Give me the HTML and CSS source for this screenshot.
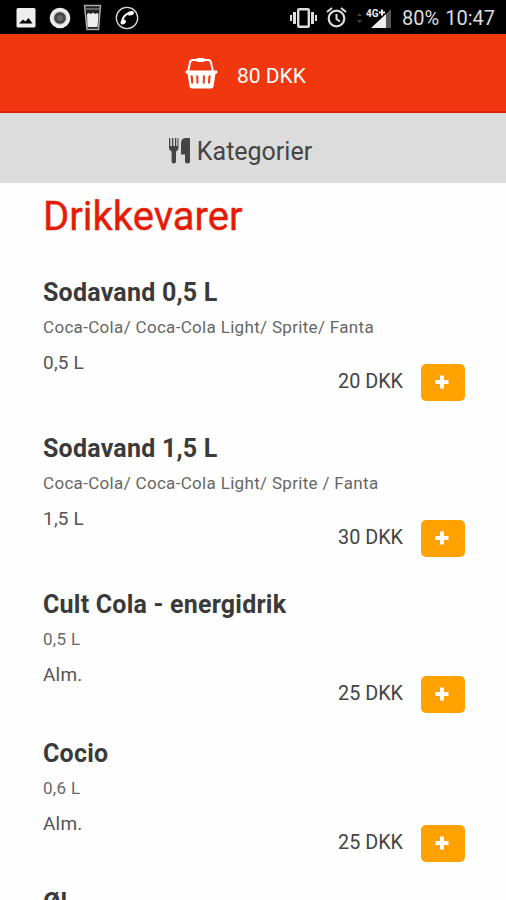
FILE: index.html
```html
<!DOCTYPE html>
<html lang="da">

<head>
    <meta charset="UTF-8">
    <meta name="viewport" content="width=device-width, initial-scale=1.0">
    <title>Drikkevarer</title>
    <link rel="stylesheet" href="styles.css">
</head>

<body>
    <div class="statusbar">
        <div class="status-left">
            <svg width="20" height="20" viewBox="0 0 20 20">
                <path fill="#eee" fill-rule="evenodd" d="M2 0h16q1.500 0 1.500 1.500v16.500q0 1.500-1.500 1.500h-16q-1.500 0-1.500-1.500v-16.500q0-1.500 1.500-1.500zM3 15.500h13.500l-4-5.500-3 3.500-2.500-2z" />
            </svg>
            <svg width="22" height="22" viewBox="0 0 22 22">
                <circle cx="11" cy="11" r="10.300" fill="#eee" />
                <circle cx="11" cy="11" r="6" fill="#444" stroke="#888" stroke-width="1" />
                <circle cx="11" cy="11" r="3" fill="#666" />
            </svg>
            <svg class="glass" width="20" height="27" viewBox="0 0 20 27">
                <path fill="#222" stroke="#aaa" stroke-width="1.500" d="M1.500 1.500h16l-2 24h-11.500z" />
                <path fill="#eee" d="M4 10l2-1 2 1 2-1.500 2 1.500 2-1 1.500 1-1 13h-10z" />
                <path fill="none" stroke="#aaa" d="M3 5h13.500" />
            </svg>
            <svg width="24" height="24" viewBox="0 0 24 24">
                <circle cx="12" cy="12" r="10.700" fill="none" stroke="#ddd" stroke-width="1.300" />
                <path fill="none" stroke="#eee" stroke-width="2" d="M7 17C7 11 11 7 16.500 7" />
                <path fill="none" stroke="#fff" stroke-width="4" stroke-linecap="round" d="M7.500 16.500l1.500-.8M14.500 7.500l2.500-.5" />
            </svg>
        </div>
        <div class="status-right">
            <svg class="vibrate" width="27" height="20" viewBox="0 0 27 20">
                <path fill="#ddd" d="M0 7h2v6h-2zM3 4h3v12h-3zM21 4h3v12h-3zM25 7h2v6h-2z" />
                <rect x="8.200" y="1.200" width="10.600" height="17.600" rx="1" fill="#000" stroke="#ddd" stroke-width="2.400" />
            </svg>
            <svg class="alarm" width="21" height="21" viewBox="0 0 21 21">
                <circle cx="10.500" cy="11.500" r="7.800" fill="none" stroke="#ddd" stroke-width="2.200" />
                <path fill="none" stroke="#ddd" stroke-width="2" d="M1 5l5-4M20 5l-5-4M10.500 7v5l3.500 2.500" />
            </svg>
            <svg class="signal" width="35" height="22" viewBox="0 0 35 22">
                <path fill="#444" d="M0 9l2.500-3 2.500 3zM0 13l2.500 3 2.500-3z" />
                <path fill="#eee" d="M14 21L29 7v14z" />
                <path fill="#555" d="M29 7l5-5v19h-5z" />
                <text class="network" x="9" y="10">4G</text>
                <path stroke="#eee" stroke-width="2" d="M22 5.500h6M25 2.500v6" />
            </svg>
            <span>80%</span>
            <span class="clock">10:47</span>
        </div>
    </div>

    <header class="basket">
        <svg width="35" height="33" viewBox="0 0 35 33">
            <path fill="none" stroke="#fff" stroke-width="2" stroke-linejoin="round" d="M5 15L7 5.500q.5-2.500 3-2.500h15q2.500 0 3 2.500L30 15" />
            <path stroke="#fff" stroke-width="4" stroke-linecap="round" d="M15 3h5" />
            <path fill="#fff" fill-rule="evenodd" d="M1.500 13.500h32q1 0 1 1.500t-1 1.500h-1l-2 13q-.5 2-2.500 2h-19q-2 0-2.500-2l-2-13h-1q-1 0-1-1.500t1-1.500zM7.500 18.500l.8 8h2l-.6-8zM13.200 18.500l.3 8h2l-.3-8zM20 18.500l-.3 8h2l.3-8zM25.500 18.500l-.6 8h2l.8-8z" />
        </svg>
        <span>80 DKK</span>
    </header>

    <nav class="categories">
        <svg width="22" height="26" viewBox="0 0 22 26">
            <path fill="#444" d="M0 0h1.300v8h1.600v-8h1.400v8h1.600v-8h1.400v8h1.200v-8h1v10q0 2-2.500 3.500v10q0 2-2.200 2t-2.200-2v-10q-2.600-1.500-2.600-3.500z" />
            <path fill="#444" d="M21 1v22.500q0 2-2.500 2t-2.500-2v-7h-4v-11.500q0-5 5-5h3q1 0 1 1z" />
        </svg>
        <span>Kategorier</span>
    </nav>

    <main class="menu">
        <h1>Drikkevarer</h1>

        <section class="item">
            <h2>Sodavand 0,5 L</h2>
            <p class="description">Coca-Cola/ Coca-Cola Light/ Sprite/ Fanta</p>
            <div class="row">
                <span class="size">0,5 L</span>
                <div class="buy">
                    <span>20 DKK</span>
                    <button class="add" aria-label="Tilføj"><svg width="14" height="14" viewBox="0 0 14 14"><path d="M7 .5v13M.5 7h13" /></svg></button>
                </div>
            </div>
        </section>

        <section class="item">
            <h2>Sodavand 1,5 L</h2>
            <p class="description">Coca-Cola/ Coca-Cola Light/ Sprite / Fanta</p>
            <div class="row">
                <span class="size">1,5 L</span>
                <div class="buy">
                    <span>30 DKK</span>
                    <button class="add" aria-label="Tilføj"><svg width="14" height="14" viewBox="0 0 14 14"><path d="M7 .5v13M.5 7h13" /></svg></button>
                </div>
            </div>
        </section>

        <section class="item short">
            <h2>Cult Cola - energidrik</h2>
            <p class="description">0,5 L</p>
            <div class="row">
                <span class="size">Alm.</span>
                <div class="buy">
                    <span>25 DKK</span>
                    <button class="add" aria-label="Tilføj"><svg width="14" height="14" viewBox="0 0 14 14"><path d="M7 .5v13M.5 7h13" /></svg></button>
                </div>
            </div>
        </section>

        <section class="item short">
            <h2>Cocio</h2>
            <p class="description">0,6 L</p>
            <div class="row">
                <span class="size">Alm.</span>
                <div class="buy">
                    <span>25 DKK</span>
                    <button class="add" aria-label="Tilføj"><svg width="14" height="14" viewBox="0 0 14 14"><path d="M7 .5v13M.5 7h13" /></svg></button>
                </div>
            </div>
        </section>

        <section class="item">
            <h2>Øl</h2>
        </section>
    </main>
</body>

</html>
```
FILE: styles.css
```css
* {
    box-sizing: border-box;
}

body {
    margin: 0;
    height: 900px;
    overflow: hidden;
    display: flex;
    flex-direction: column;
    font-family: Roboto, "Liberation Sans", sans-serif;
    background-color: #fefefe;
    color: #444;
}

.statusbar {
    flex: none;
    height: 34px;
    display: flex;
    justify-content: space-between;
    align-items: center;
    padding: 1px 11px 0 16px;
    background-color: #000;
    color: #ddd;
    font-size: 20px;
}

.status-left,
.status-right {
    display: flex;
    align-items: center;
}

.status-left {
    gap: 13px;
}

.glass {
    margin-left: -1px;
    margin-right: -1px;
}

.alarm {
    margin: 0 10px 0 9px;
}

.signal {
    margin-right: 10px;
}

.network {
    font-size: 10px;
    font-weight: 700;
    fill: #eee;
}

.clock {
    margin-left: 6px;
}

.basket {
    flex: none;
    height: 79px;
    display: flex;
    justify-content: center;
    align-items: center;
    gap: 19px;
    padding-top: 5px;
    padding-right: 17px;
    background-color: #f0370f;
    border-bottom: 2px solid #e0200a;
    color: #fff;
    font-size: 21px;
}

.basket svg {
    margin-bottom: 4px;
}

.basket span {
    padding-top: 1px;
}

.categories {
    flex: none;
    height: 70px;
    display: flex;
    justify-content: center;
    align-items: center;
    gap: 6px;
    padding-top: 5px;
    padding-right: 25px;
    background-color: #dcdcdc;
    font-size: 25px;
}

.categories span {
    padding-top: 1px;
}

.menu {
    flex: 1;
    min-height: 0;
    padding: 10px 41px 0 43px;
}

h1 {
    margin: 0 0 36px;
    font-size: 40px;
    font-weight: 400;
    line-height: 48px;
    color: #e51c05;
    -webkit-text-stroke: 0.4px #e51c05;
}

.item {
    margin-bottom: 32px;
}

.item.short {
    margin-bottom: 25px;
}

h2 {
    margin: 0 0 6px;
    font-size: 25px;
    font-weight: 700;
    letter-spacing: 0.22px;
    line-height: 32px;
    color: #3a3a3a;
}

.description {
    margin: 0 0 12px;
    font-size: 17px;
    letter-spacing: 0.32px;
    line-height: 24px;
    color: #666;
}

.row {
    display: flex;
    justify-content: space-between;
    align-items: flex-start;
    font-size: 19px;
}

.size {
    line-height: 24px;
    letter-spacing: 0.2px;
    color: #555;
}

.buy {
    display: flex;
    align-items: center;
    gap: 18px;
    padding-top: 13px;
}

.buy span {
    font-size: 19.800px;
    line-height: 35px;
    padding-bottom: 2px;
}

.add {
    display: flex;
    justify-content: center;
    align-items: center;
    width: 44px;
    height: 37px;
    padding: 0 2px 2px 0;
    border: none;
    border-radius: 5px;
    background-color: #ffa200;
}

.add path {
    stroke: #fff;
    stroke-width: 4;
}
```
